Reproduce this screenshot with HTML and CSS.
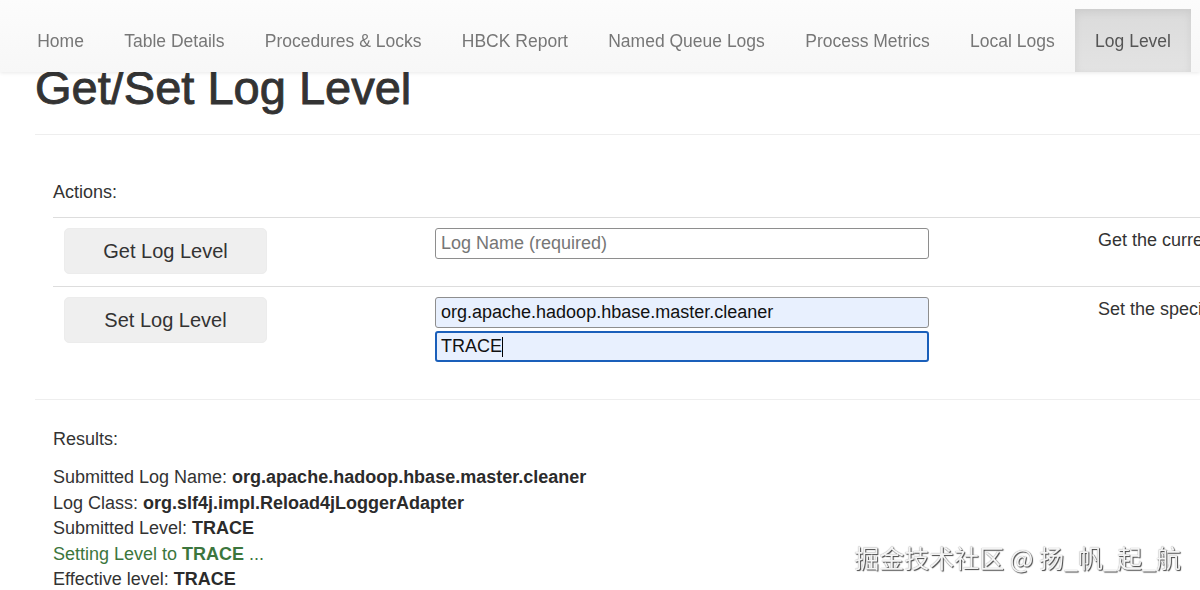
FILE: index.html
```html
<!DOCTYPE html>
<html lang="en">
<head>
<meta charset="utf-8">
<title>Log Level</title>
<link rel="stylesheet" href="styles.css">
</head>
<body>
<nav class="navbar">
  <ul class="nav">
    <li><a href="#">Home</a></li>
    <li><a href="#">Table Details</a></li>
    <li><a href="#">Procedures &amp; Locks</a></li>
    <li><a href="#">HBCK Report</a></li>
    <li><a href="#">Named Queue Logs</a></li>
    <li><a href="#">Process Metrics</a></li>
    <li><a href="#">Local Logs</a></li>
    <li class="active"><a href="#">Log Level</a></li>
  </ul>
</nav>

<main class="container">
  <h1 class="title">Get/Set Log Level</h1>
  <hr class="rule">

  <section class="panel">
    <p class="label">Actions:</p>
    <div class="actions">
      <div class="row">
        <div class="cell c1"><button class="btn" type="button">Get Log Level</button></div>
        <div class="cell c2"><input class="field" type="text" placeholder="Log Name (required)"></div>
        <div class="cell c3">Get the current log level for the specified log name.</div>
      </div>
      <div class="row">
        <div class="cell c1"><button class="btn" type="button">Set Log Level</button></div>
        <div class="cell c2 stack">
          <input class="field filled" type="text" value="org.apache.hadoop.hbase.master.cleaner">
          <div class="field filled focused">TRACE<span class="caret"></span></div>
        </div>
        <div class="cell c3">Set the specified log level for the specified log name.</div>
      </div>
    </div>
  </section>

  <hr class="rule rule-2">

  <section class="panel results">
    <p class="label">Results:</p>
    <div class="lines">
      <div>Submitted Log Name: <b>org.apache.hadoop.hbase.master.cleaner</b></div>
      <div>Log Class: <b>org.slf4j.impl.Reload4jLoggerAdapter</b></div>
      <div>Submitted Level: <b>TRACE</b></div>
      <div class="ok">Setting Level to <b>TRACE</b> ...</div>
      <div>Effective level: <b>TRACE</b></div>
    </div>
  </section>
</main>

<div class="watermark">掘金技术社区 @ 扬_帆_起_航</div>
</body>
</html>
```

FILE: styles.css
```css
html, body {
  margin: 0;
  padding: 0;
}
body {
  font-family: "Liberation Sans", Arial, Helvetica, sans-serif;
  font-size: 18px;
  line-height: 1.43;
  color: #333;
  background: #fff;
  overflow: hidden;
  width: 1200px;
  height: 590px;
}

/* navbar */
.navbar {
  position: fixed;
  top: 0;
  left: 0;
  right: 0;
  z-index: 10;
  height: 72px;
  box-sizing: border-box;
  padding-top: 9px;
  background: linear-gradient(#fcfcfc, #f7f7f7);
  box-shadow: 0 1px 4px rgba(0, 0, 0, 0.09);
}
.nav {
  list-style: none;
  margin: 0;
  padding: 0 0 0 17px;
  display: flex;
  height: 63px;
}
.nav li {
  display: flex;
}
.nav a {
  display: flex;
  align-items: center;
  padding: 3px 20.2px 0;
  font-size: 17.5px;
  color: #777;
  text-decoration: none;
  white-space: nowrap;
}
.nav .active a {
  color: #555;
  background: linear-gradient(#dbdbdb, #e3e3e3);
  box-shadow: inset 0 3px 9px rgba(0, 0, 0, 0.075);
}

/* content */
.container {
  padding: 62px 0 0 35px;
}
.title {
  margin: 0;
  font-size: 47px;
  line-height: 1.1;
  font-weight: normal;
  color: #333;
  -webkit-text-stroke: 0.9px #333;
  white-space: nowrap;
}
.rule {
  margin: 20px 0 0;
  border: 0;
  border-top: 1px solid #eee;
  height: 0;
}
.rule-2 {
  margin-top: 25px;
}
.panel {
  padding: 45px 0 0 18px;
}
.label {
  margin: 0 0 12px;
}
.actions .row {
  display: grid;
  grid-template-columns: 371px 663px auto;
  border-top: 1px solid #ddd;
}
.cell {
  box-sizing: border-box;
  padding: 10px 11px 12px;
}
.c3 {
  white-space: nowrap;
  padding-top: 10px;
}
.btn {
  display: block;
  width: 203px;
  height: 46px;
  border: 1px solid #ececec;
  border-radius: 5px;
  background: #efefef;
  font-family: inherit;
  font-size: 20px;
  color: #333;
  padding: 0;
}
.stack {
  display: flex;
  flex-direction: column;
  gap: 3px;
}
.field {
  display: block;
  box-sizing: border-box;
  width: 494px;
  height: 31px;
  margin: 0;
  padding: 0 5px;
  border: 1px solid #8e8e8e;
  border-radius: 3px;
  background: #fff;
  font-family: inherit;
  font-size: 18px;
  color: #111;
  outline: none;
  line-height: 29px;
}
.field::placeholder {
  color: #767676;
}
.field.filled {
  background: #e8f0fe;
}
.field.focused {
  border: 2px solid #1a5fba;
  padding: 0 4px;
  line-height: 27px;
  display: flex;
  align-items: center;
}
.caret {
  display: inline-block;
  width: 1px;
  height: 20px;
  background: #000;
}

.results {
  padding-top: 27px;
}
.lines {
  line-height: 25.5px;
}
.lines b {
  color: #2b2b2b;
}
.lines .ok,
.lines .ok b {
  color: #3c763d;
}

/* watermark */
.watermark {
  position: fixed;
  right: 19px;
  bottom: 20px;
  font-family: "Noto Sans CJK SC", sans-serif;
  font-size: 25px;
  line-height: 1;
  color: #f4f4f4;
  text-shadow: 1px 1px 1px #444, 0 0 1px #888;
  white-space: nowrap;
}
```
